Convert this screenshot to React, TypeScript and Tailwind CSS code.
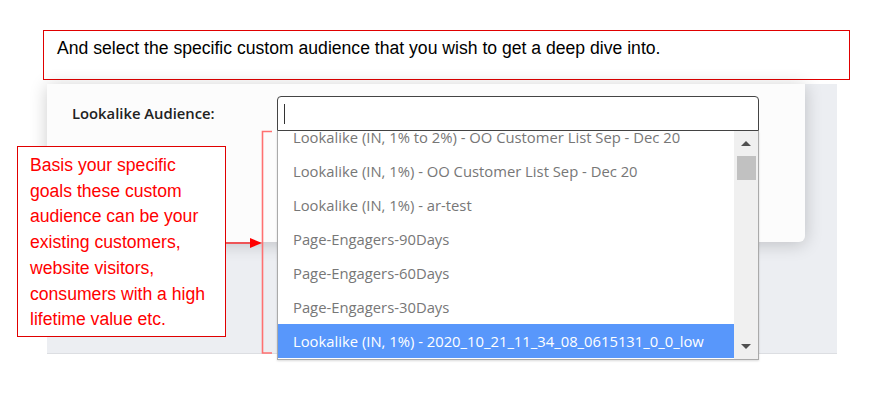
import React from 'react';

const items = [
  'Lookalike (IN, 1% to 2%) - OO Customer List Sep - Dec 20',
  'Lookalike (IN, 1%) - OO Customer List Sep - Dec 20',
  'Lookalike (IN, 1%) - ar-test',
  'Page-Engagers-90Days',
  'Page-Engagers-60Days',
  'Page-Engagers-30Days',
  'Lookalike (IN, 1%) - 2020_10_21_11_34_08_0615131_0_0_low',
];

function Dropdown() {
  return (
    <div className="absolute left-[230px] top-[12px] w-[482px]">
      <div className="h-[35px] border border-[#444] rounded-t-[4px] bg-white flex items-center pl-[6px]">
        <div className="w-px h-[20px] bg-[#333]" />
      </div>
      <div className="relative h-[229px] overflow-hidden bg-white border-l border-r border-b border-[#aaa] shadow-[0_1px_2px_rgba(0,0,0,0.15)]">
        <div className="mt-[-11px] mr-[24px]">
          {items.map((t, i) => (
            <div
              key={i}
              className={
                i === items.length - 1
                  ? 'h-[34px] flex items-center pl-[15px] bg-[#5897fb] text-white whitespace-nowrap'
                  : 'h-[34px] flex items-center pl-[15px] text-[#777] whitespace-nowrap'
              }
            >
              {t}
            </div>
          ))}
        </div>
        {/* scrollbar */}
        <div className="absolute right-0 top-0 bottom-0 w-[24px] bg-[#f0f0f0] flex flex-col items-center">
          <div className="mt-[10px] w-0 h-0 border-l-[5px] border-r-[5px] border-b-[5px] border-l-transparent border-r-transparent border-b-[#505050]" />
          <div className="mt-[10px] w-[19px] h-[24px] bg-[#c1c1c1]" />
          <div className="mt-auto mb-[10px] w-0 h-0 border-l-[5px] border-r-[5px] border-t-[5px] border-l-transparent border-r-transparent border-t-[#505050]" />
        </div>
      </div>
    </div>
  );
}

export default function App() {
  return (
    <div className="relative w-[874px] h-[399px] bg-white overflow-hidden">
      <div
        className="ml-[43px] mt-[30px] w-[807px] h-[50px] border border-[#e00000] pl-[13px] pt-[7px] text-[17.6px] leading-[21px] text-black"
        style={{ fontFamily: '"Liberation Sans", Arial, sans-serif' }}
      >
        And select the specific custom audience that you wish to get a deep dive into.
      </div>

      <div
        className="relative ml-[47px] mt-[4px] w-[790px] h-[270px] bg-[#eceef2] border-b border-[#dcdee2] text-[14.8px]"
        style={{ fontFamily: '"Open Sans", sans-serif' }}
      >
        <div className="w-[758px] h-[158px] bg-[#fcfcfc] rounded-br-[6px] shadow-[0_2px_18px_rgba(0,0,0,0.2)] pl-[25px] pt-[18px]">
          <div className="font-semibold text-[#222] leading-[22px]">Lookalike Audience:</div>
        </div>
        <Dropdown />
      </div>

      {/* annotation callout */}
      <div
        className="absolute left-[17px] top-[146px] w-[209px] h-[191px] bg-white border border-[#e00000] pl-[12px] pt-[6px] text-[17.6px] leading-[25.7px] text-[#ff0000]"
        style={{ fontFamily: '"Liberation Sans", Arial, sans-serif' }}
      >
        Basis your specific
        <br />
        goals these custom
        <br />
        audience can be your
        <br />
        existing customers,
        <br />
        website visitors,
        <br />
        consumers with a high
        <br />
        lifetime value etc.
      </div>

      {/* bracket + arrow */}
      <svg className="absolute left-0 top-0" width="874" height="399" viewBox="0 0 874 399">
        <path d="M272 131.5 H262.5 V353 H272" fill="none" stroke="#ff7070" strokeWidth="1.6" />
        <line x1="226" y1="243" x2="252" y2="243" stroke="#ff0000" strokeWidth="1.2" />
        <polygon points="250,238 262,243 250,248" fill="#ff0000" />
      </svg>
    </div>
  );
}
